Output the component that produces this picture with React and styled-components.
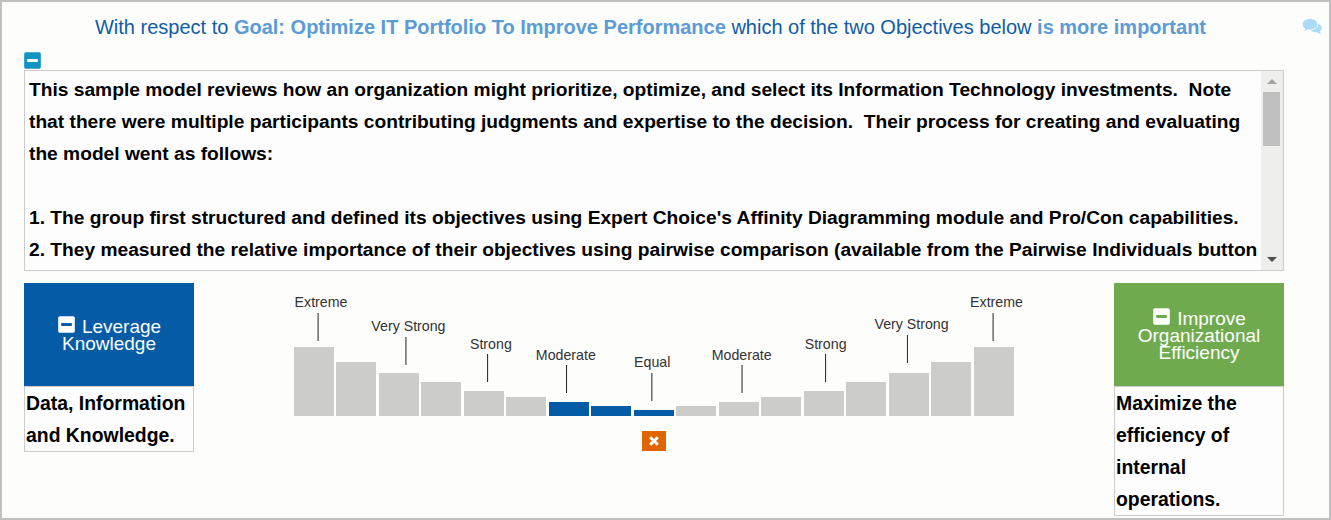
import React from "react";
import styled, { createGlobalStyle } from "styled-components";
import { FaMinusSquare } from "react-icons/fa";

const GlobalStyle = createGlobalStyle`
  html, body {
    margin: 0;
    padding: 0;
    background: #fdfdfb;
  }
  * {
    box-sizing: border-box;
  }
`;

const bars = [
  { height: 69, label: "Extreme", rise: 6, tick: 4, text: 7, gap: 3 },
  { height: 54 },
  { height: 43, label: "Very Strong", rise: 8, tick: 6.5, text: 9.5, gap: 3 },
  { height: 34 },
  { height: 25, label: "Strong", rise: 9, tick: 4, text: 7, gap: 2 },
  { height: 19 },
  { height: 14, active: true, label: "Moderate", rise: 9, tick: -2, text: -3, gap: 2 },
  { height: 10, active: true },
  { height: 6, active: true, label: "Equal", rise: 9, tick: -1.5, text: -1.5, gap: 3 },
  { height: 10 },
  { height: 14, label: "Moderate", rise: 9, tick: 3.5, text: 3, gap: 2 },
  { height: 19 },
  { height: 25, label: "Strong", rise: 9, tick: 2, text: 2, gap: 2 },
  { height: 34 },
  { height: 43, label: "Very Strong", rise: 10, tick: -1, text: 3, gap: 3 },
  { height: 54 },
  { height: 69, label: "Extreme", rise: 6, tick: 0, text: 3, gap: 3 },
];

const Frame = styled.div`
  width: 1331px;
  height: 520px;
  border: 2px solid #c0c0c0;
  background: #fdfdfb;
  overflow: hidden;
  font-family: "Liberation Sans", Arial, sans-serif;
  padding: 0 45px 0 22px;
`;

const TitleRow = styled.div`
  display: flex;
  align-items: center;
  height: 49px;
  margin-right: -38px;
`;

const Title = styled.div`
  width: 1253px;
  padding-top: 2px;
  text-align: center;
  font-size: 20px;
  color: #0f5ca6;
  strong {
    color: #5b9bd6;
  }
`;

const CommentButton = styled.svg`
  flex: none;
  width: 20px;
  height: 16px;
  margin: 0 0 1px 25px;
  fill: #a9daf7;
`;

const CollapseButton = styled.div`
  display: flex;
  height: 19px;
  margin-left: -1px;
  font-size: 19px;
  line-height: 1;
  color: #0f94c4;
`;

const InfoBox = styled.div`
  display: flex;
  width: 1260px;
  height: 201px;
  border: 1px solid #cccccc;
  background: #fdfdfd;
`;

const InfoText = styled.div`
  flex: 1;
  overflow: hidden;
  padding: 3px 0 0 4px;
  font-size: 19.2px;
  line-height: 32px;
  font-weight: bold;
  color: #000;
  white-space: pre-wrap;
`;

const Track = styled.div`
  position: relative;
  flex: none;
  width: 22px;
  padding: 21px 3px 0 2px;
  background: #eeeeec;
`;

const Thumb = styled.div`
  height: 54px;
  background: #c1c0c1;
`;

const Arrow = styled.span`
  position: absolute;
  left: 6px;
  ${(p) => (p.$down ? "bottom: 8px;" : "top: 8px;")}
  border-left: 5px solid transparent;
  border-right: 5px solid transparent;
  ${(p) =>
    p.$down ? "border-top: 5px solid #505050;" : "border-bottom: 5px solid #a3a3a3;"}
`;

const Compare = styled.div`
  display: grid;
  grid-template-columns: 170px 1fr 170px;
  width: 1260px;
  margin-top: 12px;
`;

const Side = styled.div`
  display: flex;
  flex-direction: column;
`;

const Header = styled.div`
  display: flex;
  align-items: center;
  justify-content: center;
  height: 103px;
  padding: 0 8px 2px;
  background: ${(p) => p.$color};
  color: #fff;
  font-size: 19px;
  line-height: 17px;
  text-align: center;
  svg {
    vertical-align: -1px;
    margin-right: 6px;
    font-size: 19px;
  }
`;

const Description = styled.div`
  border: 1px solid #cccccc;
  padding: 0 1px;
  font-size: 19.4px;
  line-height: 32px;
  font-weight: bold;
  color: #000;
  background: #fdfdfd;
`;

const Scale = styled.div`
  display: flex;
  flex-direction: column;
  align-items: center;
`;

const Bars = styled.div`
  display: flex;
  align-items: flex-end;
  gap: 2.48px;
  width: 720px;
  height: 133px;
`;

const Bar = styled.div`
  position: relative;
  flex: none;
  width: 40px;
  height: ${(p) => p.$height}px;
  background: ${(p) => (p.$active ? "#045ba6" : "#cccdcb")};
`;

const Marker = styled.div`
  position: absolute;
  left: 50%;
  bottom: calc(100% + ${(p) => p.$rise}px);
  display: flex;
  flex-direction: column;
  align-items: center;
  transform: translateX(calc(-50% + ${(p) => p.$tick}px));
`;

const MarkerLabel = styled.span`
  transform: translateX(${(p) => p.$shift}px);
  margin-bottom: ${(p) => p.$gap}px;
  font-size: 14.2px;
  line-height: 16px;
  white-space: nowrap;
  color: #333;
`;

const Tick = styled.span`
  width: 1px;
  height: 28px;
  background: #222;
`;

const ClearButton = styled.div`
  display: flex;
  align-items: center;
  justify-content: center;
  width: 24px;
  height: 20px;
  margin-top: 15px;
  background: #e06400;
  svg {
    width: 10px;
    height: 10px;
    stroke: #fff;
    stroke-width: 3;
  }
`;

function CommentsIcon() {
  return (
    <CommentButton viewBox="0 0 20 16">
      <path d="M13 5.5c4 0 6.8 2 6.8 4.6 0 1.5-.9 2.7-2.2 3.5.2.8.8 1.6 1.4 2.2-1.5-.1-3-.7-4-1.6-3.2.2-6-1-7-3z" />
      <path
        d="M8 .5c4.300 0 7.700 2.500 7.700 5.700S12.300 11.900 8 11.900c-.7 0-1.300 0-2-.2-1.100 1-2.700 1.700-4.500 1.900.8-.8 1.400-1.800 1.600-2.800C1.200 9.800.3 8.100.3 6.200.3 3 3.700.5 8 .5z"
        stroke="#fdfdfb"
        strokeWidth="1"
      />
    </CommentButton>
  );
}

function Judgment({ color, title, text }) {
  return (
    <Side>
      <Header $color={color}>
        <div>
          <FaMinusSquare />
          {title}
        </div>
      </Header>
      <Description>{text}</Description>
    </Side>
  );
}

export default function App() {
  return (
    <Frame>
      <GlobalStyle />
      <TitleRow>
        <Title>
          With respect to <strong>Goal: Optimize IT Portfolio To Improve Performance</strong> which of
          the two Objectives below <strong>is more important</strong>
        </Title>
        <CommentsIcon />
      </TitleRow>
      <CollapseButton>
        <FaMinusSquare />
      </CollapseButton>
      <InfoBox>
        <InfoText>
          {"This sample model reviews how an organization might prioritize, optimize, and select its Information Technology investments.  Note that there were multiple participants contributing judgments and expertise to the decision.  Their process for creating and evaluating the model went as follows:\n\n1. The group first structured and defined its objectives using Expert Choice's Affinity Diagramming module and Pro/Con capabilities.\n2. They measured the relative importance of their objectives using pairwise comparison (available from the Pairwise Individuals button"}
        </InfoText>
        <Track>
          <Arrow />
          <Thumb />
          <Arrow $down />
        </Track>
      </InfoBox>
      <Compare>
        <Judgment color="#045ba6" title="Leverage Knowledge" text="Data, Information and Knowledge." />
        <Scale>
          <Bars>
            {bars.map((bar, i) => (
              <Bar key={i} $height={bar.height} $active={bar.active}>
                {bar.label && (
                  <Marker $rise={bar.rise} $tick={bar.tick}>
                    <MarkerLabel $shift={bar.text - bar.tick} $gap={bar.gap}>
                      {bar.label}
                    </MarkerLabel>
                    <Tick />
                  </Marker>
                )}
              </Bar>
            ))}
          </Bars>
          <ClearButton>
            <svg viewBox="0 0 10 10">
              <path d="M1.200 1.200 8.800 8.800M8.800 1.200 1.200 8.800" />
            </svg>
          </ClearButton>
        </Scale>
        <Judgment
          color="#6fab4e"
          title="Improve Organizational Efficiency"
          text="Maximize the efficiency of internal operations."
        />
      </Compare>
    </Frame>
  );
}
